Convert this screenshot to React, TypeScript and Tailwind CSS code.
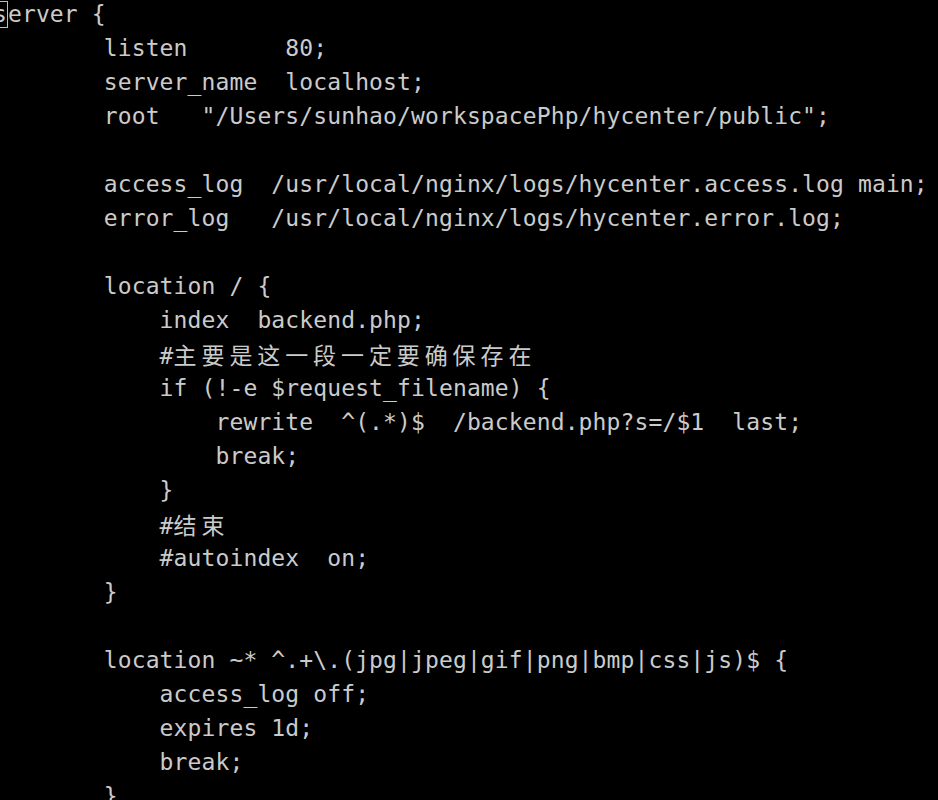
import React from 'react';

const mono = "'DejaVu Sans Mono', 'Liberation Mono', monospace";
const cjk = "'Noto Sans CJK SC', 'DejaVu Sans Mono', sans-serif";

const Cjk: React.FC<{ text: string }> = ({ text }) => (
  <span className="tracking-[4.9px]" style={{ fontFamily: cjk }}>
    {text}
  </span>
);

const lines: React.ReactNode[] = [
  <>
    <span className="inline-block border border-[#bdbdbd] leading-[25px]">s</span>erver {'{'}
  </>,
  '        listen       80;',
  '        server_name  localhost;',
  '        root   "/Users/sunhao/workspacePhp/hycenter/public";',
  '',
  '        access_log  /usr/local/nginx/logs/hycenter.access.log main;',
  '        error_log   /usr/local/nginx/logs/hycenter.error.log;',
  '',
  '        location / {',
  '            index  backend.php;',
  <>
    {'            #'}
    <Cjk text="主要是这一段一定要确保存在" />
  </>,
  '            if (!-e $request_filename) {',
  '                rewrite  ^(.*)$  /backend.php?s=/$1  last;',
  '                break;',
  '            }',
  <>
    {'            #'}
    <Cjk text="结束" />
  </>,
  '            #autoindex  on;',
  '        }',
  '',
  '        location ~* ^.+\\.(jpg|jpeg|gif|png|bmp|css|js)$ {',
  '            access_log off;',
  '            expires 1d;',
  '            break;',
  '        }',
];

export default function App() {
  return (
    <div className="w-[938px] h-[800px] bg-black overflow-hidden">
      <div
        className="-mt-[3px] -ml-[8px] text-[23px] leading-[34px] tracking-[0.12px] text-[#cbcbcb] whitespace-pre"
        style={{ fontFamily: mono }}
      >
        {lines.map((line, i) => (
          <div key={i} className="h-[34px]">
            {line}
          </div>
        ))}
      </div>
    </div>
  );
}
